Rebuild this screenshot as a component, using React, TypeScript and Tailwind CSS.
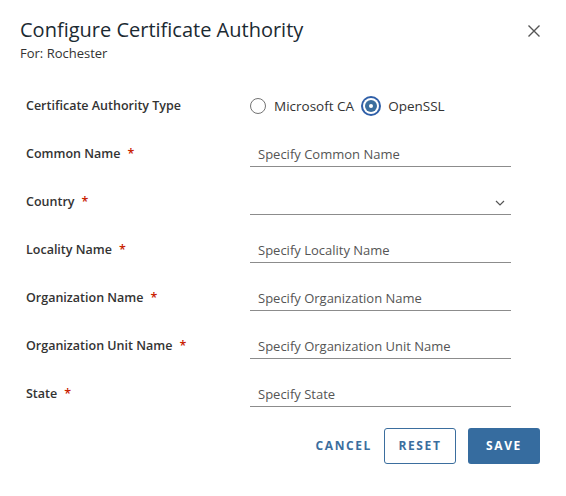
import { useState } from 'react'

const FIELDS = [
  { label: 'Common Name', placeholder: 'Specify Common Name' },
  { label: 'Country', select: true },
  { label: 'Locality Name', placeholder: 'Specify Locality Name' },
  { label: 'Organization Name', placeholder: 'Specify Organization Name' },
  { label: 'Organization Unit Name', placeholder: 'Specify Organization Unit Name' },
  { label: 'State', placeholder: 'Specify State' },
]

function Radio({ checked, label, onClick }: { checked: boolean; label: string; onClick: () => void }) {
  return (
    <label className="flex items-center gap-[7px] cursor-pointer" onClick={onClick}>
      {checked ? (
        <span className="w-[20px] h-[20px] rounded-full bg-[#2f5fa8] flex items-center justify-center">
          <span className="w-[16px] h-[16px] rounded-full bg-white flex items-center justify-center">
            <span className="w-[12px] h-[12px] rounded-full bg-[#3b6e9e] flex items-center justify-center">
              <span className="w-[4px] h-[4px] rounded-full bg-white" />
            </span>
          </span>
        </span>
      ) : (
        <span className="w-[16px] h-[16px] mx-[1px] rounded-full border border-[#737373] bg-white" />
      )}
      <span className="text-[13.5px] text-[#333]">{label}</span>
    </label>
  )
}

export default function App() {
  const [caType, setCaType] = useState('openssl')

  return (
    <div className="w-[566px] h-[496px] bg-white relative" style={{ fontFamily: '"Open Sans", "Liberation Sans", sans-serif' }}>
      <div className="px-5 pt-[17px]">
        <div className="flex items-start justify-between">
          <div>
            <h1 className="text-[20px] leading-[26px] text-[#1b2a32]">Configure Certificate Authority</h1>
            <div className="text-[13px] leading-[18px] text-[#333] mt-[1px]">For: Rochester</div>
          </div>
          <button className="mt-[6px] mr-[4px] text-[#555]">
            <svg width="16" height="16" viewBox="0 0 16 16" fill="none" stroke="currentColor" strokeWidth="1.4">
              <path d="M2.5 2.5 L13.5 13.5 M13.5 2.5 L2.5 13.5" />
            </svg>
          </button>
        </div>

        <div className="mt-[20px] pl-[6px]">
          <div className="flex items-center h-[48px]">
            <div className="w-[223px] text-[12.5px] font-semibold text-[#333]">Certificate Authority Type</div>
            <div className="flex items-center gap-[7px]">
              <Radio checked={caType === 'microsoft'} label="Microsoft CA" onClick={() => setCaType('microsoft')} />
              <Radio checked={caType === 'openssl'} label="OpenSSL" onClick={() => setCaType('openssl')} />
            </div>
          </div>

          {FIELDS.map(f => (
            <div key={f.label} className="flex items-center h-[48px]">
              <div className="w-[224px] text-[12.5px] font-semibold text-[#333]">
                {f.label}
                <span className="text-[#c92100] ml-[7px]">*</span>
              </div>
              <div className="w-[261px] h-[24px] mt-[2px] border-b border-[#8c8c8c] flex items-center justify-between px-[8px]">
                {f.select ? (
                  <>
                    <span />
                    <svg width="10" height="6" viewBox="0 0 10 6" fill="none" stroke="#555" strokeWidth="1.2" className="mr-[-2px]">
                      <path d="M1 1 L5 5 L9 1" />
                    </svg>
                  </>
                ) : (
                  <span className="text-[13px] text-[#555]">{f.placeholder}</span>
                )}
              </div>
            </div>
          ))}
        </div>

        <div className="flex items-center justify-end gap-3 mt-[10px] pr-[6px]">
          <button className="h-9 pl-3 text-[12px] font-bold tracking-[1.6px] text-[#3b6e9e]">CANCEL</button>
          <button className="h-9 w-[72px] rounded-[3px] border border-[#3b6e9e] text-[12px] font-bold tracking-[1.6px] text-[#3b6e9e]">RESET</button>
          <button className="h-9 w-[72px] rounded-[3px] bg-[#366c9f] text-[12px] font-bold tracking-[1.6px] text-white">SAVE</button>
        </div>
      </div>
    </div>
  )
}
